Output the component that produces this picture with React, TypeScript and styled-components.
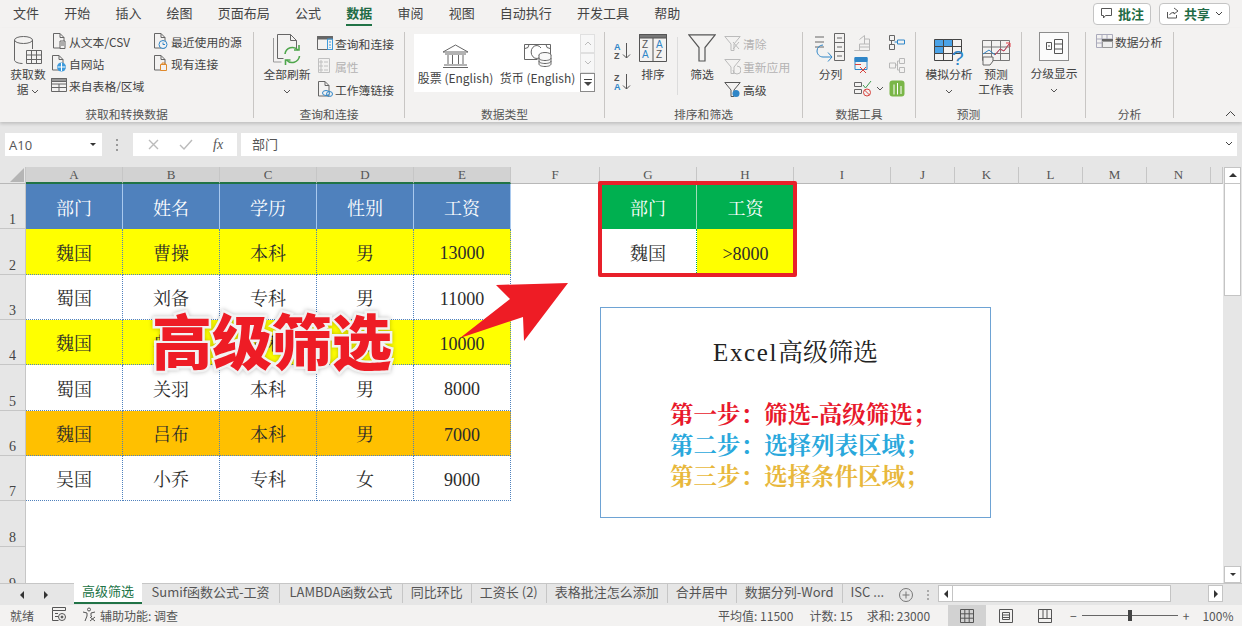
import React from 'react';
import styled, { createGlobalStyle } from 'styled-components';

const UI = `"Noto Sans CJK SC", "Noto Sans", sans-serif`;
const SERIF = `"Liberation Serif", "Noto Serif CJK SC", "Noto Sans CJK SC", serif`;

const GlobalStyle = createGlobalStyle`
  html, body { margin: 0; padding: 0; background: #fff; }
  * { box-sizing: border-box; }
`;

const Page = styled.div`
  width: 1242px;
  height: 626px;
  overflow: hidden;
  display: flex;
  flex-direction: column;
  font-family: ${UI};
  color: #444;
  background: #e6e6e6;
`;

/* title tabs */
const TabBar = styled.div`
  height: 28px;
  flex: none;
  display: flex;
  align-items: flex-start;
  gap: 25.2px;
  padding: 2px 12px 0 13px;
  background: #f3f2f1;
`;
const MenuTab = styled.div<{ $active?: boolean }>`
  height: 24px;
  font-size: 13px;
  line-height: 22px;
  white-space: nowrap;
  font-weight: ${p => (p.$active ? 700 : 400)};
  color: ${p => (p.$active ? '#1f6b45' : '#444')};
  border-bottom: ${p => (p.$active ? '2px solid #217346' : '2px solid transparent')};
`;
const TopActions = styled.div`
  margin-left: auto;
  display: flex;
  gap: 8px;
  padding-top: 1px;
`;
const TopButton = styled.div<{ $w: number }>`
  width: ${p => p.$w}px;
  height: 22px;
  display: flex;
  align-items: center;
  justify-content: center;
  gap: 5px;
  padding-bottom: 2px;
  background: #fff;
  border: 1px solid #c4c4c4;
  border-radius: 4px;
  font-size: 13px;
  font-weight: 700;
  color: #1f6b45;
`;

/* ribbon */
const Ribbon = styled.div`
  height: 94px;
  flex: none;
  display: flex;
  padding-top: 4px;
  background: #f3f2f1;
  box-shadow: 0 2px 3px rgba(0, 0, 0, 0.16);
  position: relative;
  font-size: 11.8px;
`;
const Group = styled.section<{ $w: number }>`
  width: ${p => p.$w}px;
  height: 86px;
  flex: none;
  display: flex;
  flex-direction: column;
  border-right: 1px solid #c8c6c4;
`;
const GroupBody = styled.div<{ $pad?: number }>`
  height: 73px;
  margin-top: -1px;
  display: flex;
  padding-left: ${p => p.$pad ?? 0}px;
`;
const GroupLabel = styled.div`
  height: 14px;
  line-height: 20px;
  text-align: center;
  font-size: 11.8px;
  color: #555;
`;
const BigButton = styled.div<{ $w: number; $ml?: number }>`
  width: ${p => p.$w}px;
  margin-left: ${p => p.$ml ?? 0}px;
  flex: none;
  display: flex;
  flex-direction: column;
  align-items: center;
  text-align: center;
  line-height: 15px;
  white-space: nowrap;
`;
const BigIcon = styled.div<{ $h?: number }>`
  height: ${p => p.$h ?? 35}px;
  display: flex;
  align-items: flex-end;
  justify-content: center;
`;
const BigCaption = styled.span`
  margin-top: 4px;
`;
const SmallColumn = styled.div<{ $w?: number; $ml?: number; $top?: number; $gap?: number }>`
  width: ${p => (p.$w ? `${p.$w}px` : 'auto')};
  margin-left: ${p => p.$ml ?? 0}px;
  padding-top: ${p => p.$top ?? 0}px;
  flex: none;
  display: flex;
  flex-direction: column;
  gap: ${p => p.$gap ?? 2}px;
`;
const SmallItem = styled.div<{ $off?: boolean }>`
  height: 20px;
  display: flex;
  align-items: center;
  gap: 2px;
  white-space: nowrap;
  color: ${p => (p.$off ? '#b3b3b3' : '#444')};
`;
const IconSlot = styled.span<{ $w?: number }>`
  width: ${p => p.$w ?? 17}px;
  flex: none;
  display: flex;
  justify-content: center;
`;
const Gallery = styled.div`
  margin: 3px 0 0 9px;
  width: 166px;
  height: 58px;
  display: flex;
  gap: 7px;
  padding-left: 4px;
  background: #fff;
  font-size: 12px;
  white-space: nowrap;
`;
const GalleryItem = styled.div`
  width: 75px;
  display: flex;
  flex-direction: column;
  align-items: center;
  justify-content: flex-end;
  padding-bottom: 6px;
  gap: 2px;
  line-height: 16px;
`;
const GalleryScroll = styled.div`
  width: 15px;
  height: 58px;
  margin-top: 3px;
  display: flex;
  flex-direction: column;
`;
const GalleryButton = styled.div<{ $boxed?: boolean }>`
  flex: 1;
  display: flex;
  align-items: center;
  justify-content: center;
  background: ${p => (p.$boxed ? '#fff' : '#f7f7f7')};
  border: 1px solid ${p => (p.$boxed ? '#8a8a8a' : '#e0e0e0')};
`;
const VSep = styled.div<{ $ml: number }>`
  width: 1px;
  height: 58px;
  margin: 6px 0 0 ${p => p.$ml}px;
  background: #dcdcdc;
  flex: none;
`;
const SortStack = styled.div`
  margin-left: 9px;
  padding-top: 11px;
  width: 20px;
  display: flex;
  flex-direction: column;
  gap: 13px;
`;
const ToolIcons = styled.div<{ $ml: number }>`
  margin-left: ${p => p.$ml}px;
  padding-top: 2px;
  display: flex;
  flex-direction: column;
  gap: 4px;
  flex: none;
`;
const ToolRow = styled.div`
  height: 19px;
  display: flex;
  align-items: center;
  gap: 3px;
`;
const OutlineBox = styled.div`
  width: 30px;
  height: 29px;
  margin-top: 1px;
  display: flex;
  align-items: center;
  justify-content: center;
  background: #fbfbfb;
  border: 1px solid #8d8d8d;
`;
const Collapse = styled.div`
  margin-left: auto;
  margin-right: 6px;
  align-self: flex-end;
  padding-bottom: 2px;
`;

/* formula bar */
const FormulaBar = styled.div`
  height: 45px;
  flex: none;
  display: flex;
  align-items: flex-start;
  padding: 11px 5px 0;
  background: #e6e6e6;
`;
const NameBox = styled.div`
  width: 97px;
  height: 23px;
  display: flex;
  align-items: center;
  justify-content: space-between;
  padding: 0 5px 0 4px;
  background: #fff;
  font-size: 13px;
  color: #555;
  font-family: "Open Sans", sans-serif;
`;
const Dots = styled.div`
  width: 31px;
  height: 23px;
  display: flex;
  align-items: center;
  justify-content: center;
`;
const FxBox = styled.div`
  width: 104px;
  height: 23px;
  display: flex;
  align-items: center;
  justify-content: space-around;
  padding: 0 4px;
  background: #fff;
`;
const FxText = styled.span`
  font-family: "Liberation Serif", serif;
  font-style: italic;
  font-size: 14px;
  color: #555;
`;
const FormulaInput = styled.div`
  flex: 1;
  height: 23px;
  margin-left: 4px;
  display: flex;
  align-items: center;
  justify-content: space-between;
  padding: 0 4px 2px 11px;
  background: #fff;
  font-size: 13px;
  color: #555;
`;

/* sheet */
const SheetArea = styled.div`
  height: 416px;
  flex: none;
  display: flex;
  position: relative;
  background: #fff;
`;
const SheetGrid = styled.div<{ $cols: string; $rows: string }>`
  flex: 1;
  display: grid;
  grid-template-columns: ${p => p.$cols};
  grid-template-rows: ${p => p.$rows};
  overflow: hidden;
`;
const Corner = styled.div`
  background: #e6e6e6;
  border-right: 1px solid #c6c6c6;
  border-bottom: 1px solid #b8b8b8;
  display: flex;
  align-items: flex-end;
  justify-content: flex-end;
  padding: 0 1px 1px 0;
`;
const CornerMark = styled.div`
  width: 14px;
  height: 14px;
  background: #b5b5b5;
  clip-path: polygon(100% 0, 100% 100%, 0 100%);
`;
const ColHead = styled.div<{ $on?: boolean }>`
  display: flex;
  align-items: center;
  justify-content: center;
  font-family: ${SERIF};
  font-size: 13px;
  color: #555;
  background: ${p => (p.$on ? '#d2d2d2' : '#e6e6e6')};
  border-right: 1px solid #c6c6c6;
  border-bottom: ${p => (p.$on ? '2px solid #217346' : '1px solid #b8b8b8')};
`;
const RowHead = styled.div`
  display: flex;
  align-items: flex-end;
  justify-content: center;
  font-family: ${SERIF};
  font-size: 14px;
  line-height: 16px;
  color: #444;
  background: #e6e6e6;
  border-right: 1px solid #c6c6c6;
  border-bottom: 1px solid #c6c6c6;
`;
const LINES = {
  none: '',
  dot: 'border-right: 1px dotted #4f81bd; border-bottom: 1px dotted #4f81bd;',
  head: 'border-right: 1px solid #a9c9ee;',
  greenHead: 'border-right: 1px solid #9fdcb8;',
  greenDot: 'border-right: 1px dotted #00b050;',
};
const Cell = styled.div<{ $bg?: string; $color?: string; $line?: keyof typeof LINES; $num?: boolean }>`
  display: flex;
  align-items: center;
  justify-content: center;
  font-family: ${SERIF};
  font-size: 18px;
  padding-top: ${p => (p.$num ? '4px' : '0')};
  color: ${p => p.$color ?? '#2b2b2b'};
  background: ${p => p.$bg ?? '#fff'};
  ${p => LINES[p.$line ?? 'none']}
`;
const Frame = styled.div`
  position: absolute;
  left: 598px;
  top: 14px;
  width: 199px;
  height: 96px;
  border: 4px solid #e8202a;
  border-radius: 2px;
`;
const Stamp = styled.div`
  position: absolute;
  left: 152px;
  top: 138px;
  font-size: 60px;
  line-height: 68px;
  font-weight: 900;
  white-space: nowrap;
  color: #ee1c25;
  -webkit-text-stroke: 5px #f2f2f2;
  paint-order: stroke fill;
  filter: drop-shadow(0 0 2px rgba(0, 0, 0, 0.25));
`;
const Arrow = styled.svg`
  position: absolute;
  left: 455px;
  top: 112px;
`;
const NoteBox = styled.div`
  position: absolute;
  left: 600px;
  top: 140px;
  width: 391px;
  height: 211px;
  border: 1.5px solid #6ea3d4;
  background: #fff;
  display: flex;
  flex-direction: column;
  font-family: ${SERIF};
`;
const NoteTitle = styled.div`
  margin-top: 27px;
  height: 36px;
  line-height: 36px;
  text-align: center;
  font-size: 25px;
  color: #222;
`;
const NoteLatin = styled.span`
  letter-spacing: 1.6px;
`;
const NoteSteps = styled.div`
  margin: 29px 0 0 69px;
  font-size: 23.5px;
  line-height: 31px;
  font-weight: 700;
`;
const NoteStep = styled.div<{ $color: string }>`
  color: ${p => p.$color};
  white-space: nowrap;
`;

const VScroll = styled.div`
  width: 19px;
  flex: none;
  display: flex;
  flex-direction: column;
  background: #e6e6e6;
  padding: 0 1px;
`;
const VButton = styled.div`
  height: 17px;
  display: flex;
  align-items: center;
  justify-content: center;
  background: #fff;
  border: 1px solid #c4c4c4;
`;
const VThumb = styled.div`
  height: 112px;
  background: #fff;
  border: 1px solid #c4c4c4;
  border-top: 0;
`;
const VTrack = styled.div`
  flex: 1;
`;

/* sheet tabs */
const SheetTabs = styled.div`
  height: 22px;
  flex: none;
  display: flex;
  background: #e6e6e6;
  border-top: 1px solid #c6c6c6;
`;
const TabNav = styled.div`
  width: 74px;
  flex: none;
  display: flex;
  align-items: center;
  gap: 16px;
  padding-left: 18px;
`;
const TabList = styled.div`
  width: 823px;
  flex: none;
  display: flex;
`;
const SheetTab = styled.div<{ $active?: boolean; $tight?: boolean }>`
  flex: none;
  padding: 0 ${p => (p.$active ? '8px' : p.$tight ? '8px' : '9.5px')};
  font-size: 13px;
  line-height: 16px;
  white-space: nowrap;
  color: ${p => (p.$active ? '#217346' : '#555')};
  background: ${p => (p.$active ? '#fff' : 'transparent')};
  margin-top: ${p => (p.$active ? '-1px' : '0')};
  height: ${p => (p.$active ? '21px' : '19px')};
  border-bottom: ${p => (p.$active ? '2px solid #217346' : '0')};
  border-right: ${p => (p.$active ? '0' : '1px solid #c6c6c6')};
  &:last-child { border-right: 0; }
`;
const TabTools = styled.div`
  width: 41px;
  flex: none;
  display: flex;
  align-items: center;
  gap: 13px;
  padding-left: 1px;
`;
const HScroll = styled.div`
  width: 285px;
  flex: none;
  height: 17px;
  margin-top: 1px;
  display: flex;
`;
const HButton = styled.div`
  width: 15px;
  flex: none;
  display: flex;
  align-items: center;
  justify-content: center;
  background: #fff;
  border: 1px solid #c4c4c4;
`;
const HThumb = styled.div`
  width: 218px;
  background: #fff;
  border: 1px solid #c4c4c4;
  border-left: 0;
`;
const HTrack = styled.div`
  flex: 1;
`;

/* status bar */
const StatusBar = styled.div`
  flex: 1;
  display: flex;
  align-items: center;
  padding-left: 10px;
  background: #f3f2f1;
  font-size: 12px;
  color: #555;
`;
const StatusText = styled.span<{ $ml?: number }>`
  margin-left: ${p => p.$ml ?? 0}px;
  white-space: nowrap;
`;
const ViewButton = styled.div<{ $on?: boolean }>`
  width: 38px;
  height: 21px;
  margin-left: ${p => (p.$on ? '18px' : '1px')};
  display: flex;
  align-items: center;
  justify-content: center;
  background: ${p => (p.$on ? '#d2d2d2' : 'transparent')};
`;
const ZoomRail = styled.div`
  width: 96px;
  height: 1px;
  margin: 0 5px;
  background: #666;
  display: flex;
  align-items: center;
  justify-content: center;
`;
const ZoomThumb = styled.div`
  width: 4px;
  height: 11px;
  background: #444;
`;

/* icons, drawn at their pixel size */
const G = '#666';
const B = '#3f9bdc';
const Ic = ({ w, h, children }: { w: number; h: number; children: React.ReactNode }) => (
  <svg width={w} height={h} viewBox={`0 0 ${w} ${h}`} fill="none" stroke={G} strokeWidth="1">{children}</svg>
);
const page = 'M1.5 1.5h6.5l4 4v10.5h-10.5z M8 1.5v4h4';

const DbIcon = () => (
  <Ic w={30} h={31}>
    <ellipse cx="10.5" cy="5" rx="9" ry="3.5" />
    <path d="M1.5 5v20c0 2 4 3.5 8 3.5 M19.5 5v9" />
    <path d="M13.5 15.5h15v13h-15z M13.5 20h15 M13.5 24.5h15 M18.5 15.5v13 M23.5 15.5v13" />
  </Ic>
);
const PageText = () => <Ic w={14} h={18}><path d={page} /><path d="M8 9h5v7.5h-5z M9 11h3 M9 13h3" fill="#f3f2f1" /></Ic>;
const PageWeb = () => <Ic w={15} h={18}><path d={page} /><circle cx="10.5" cy="13" r="4.5" fill={B} stroke="none" /><path d="M6.5 13h8 M10.5 9v8" stroke="#fff" /></Ic>;
const TableIcon = () => (
  <Ic w={16} h={16}>
    <path d="M.5 1.5h15v13H.5z M.5 7h15 M.5 10.5h15 M8 7v7.5" />
    <path d="M.5 1.5h15v3H.5z" fill="#999" />
  </Ic>
);
const PageClock = () => <Ic w={15} h={18}><path d={page} /><circle cx="10" cy="12.5" r="4" fill="#f3f2f1" stroke="#2f86c8" /><path d="M10 10.5v2h2" stroke="#2f86c8" /></Ic>;
const PageLink = () => <Ic w={15} h={18}><path d={page} /><path d="M7.5 10.5h6v6h-6z" fill="#f3f2f1" stroke="#e0892b" /><path d="M9 10.5V9h3v1.5" stroke="#e0892b" /></Ic>;
const RefreshIcon = () => (
  <Ic w={30} h={33}>
    <path d="M5.5 1.5h13l6 6v9 M5.5 1.5v24h6 M18.5 1.5v6h6" />
    <path d="M1.5 5v24h8" stroke="#999" />
    <path d="M13 21a7.5 7.5 0 0 1 13-4 M27.5 23a7.5 7.5 0 0 1-13 4" stroke="#4fa64c" strokeWidth="1.6" />
    <path d="M27 12v5h-5 M13.5 32v-5h5" stroke="#4fa64c" strokeWidth="1.6" />
  </Ic>
);
const QueryIcon = () => (
  <Ic w={16} h={15}>
    <path d="M.5 .5h15v13H.5z" />
    <path d="M.5 .5h15v2.5H.5z" fill="#666" />
    <path d="M10.5 3v10.5h5V3z" stroke="#3f9bdc" />
    <path d="M13 5v7" stroke="#3f9bdc" strokeDasharray="2 1" />
  </Ic>
);
const PropsIcon = () => <Ic w={13} h={16}><g stroke="#c0c0c0"><path d="M.5 .5h11v14H.5z M6 4h4 M6 8h4 M6 12h4" /><path d="M2 3h2v2H2z M2 7h2v2H2z M2 11h2v2H2z" /></g></Ic>;
const PageChain = () => <Ic w={16} h={18}><path d={page} /><ellipse cx="9" cy="13" rx="3.5" ry="2.5" fill="#f3f2f1" stroke="#2f86c8" /><ellipse cx="12.5" cy="14" rx="3" ry="2.5" stroke="#2f86c8" /></Ic>;
const BankIcon = () => (
  <Ic w={27} h={24}>
    <path d="M13.5 1L26 8H1z M3 10h21 M6 11v9 M10.5 11v9 M16.5 11v9 M21 11v9 M2 21h23 M1 23.5h25" />
  </Ic>
);
const MoneyIcon = () => (
  <Ic w={30} h={25}>
    <path d="M1.5 1.5h26v15H20 M1.5 1.5v15h13" />
    <path d="M6 1.5a4 4 0 0 1-4 4 M23 1.5a4 4 0 0 0 4 4" />
    <path d="M18 5a5.5 6.5 0 1 0 0 8" />
    <ellipse cx="22" cy="12" rx="6" ry="2.5" fill="#f9f9f9" />
    <path d="M16 12v9c0 1.500 2.500 2.500 6 2.500s6-1 6-2.500v-9 M16 15c0 1.500 2.500 2.500 6 2.500s6-1 6-2.500 M16 18c0 1.500 2.500 2.500 6 2.500s6-1 6-2.500" fill="#f9f9f9" />
  </Ic>
);
const Arr = ({ a, b }: { a: string; b: string }) => (
  <svg width="18" height="18" viewBox="0 0 18 18" fill="none">
    <text x="0" y="8" fontSize="9" fontFamily="'Liberation Sans',sans-serif" fontWeight="700" fill={a === 'A' ? '#2f86c8' : '#555'}>{a}</text>
    <text x="0" y="17" fontSize="9" fontFamily="'Liberation Sans',sans-serif" fontWeight="700" fill={b === 'A' ? '#2f86c8' : '#555'}>{b}</text>
    <path d="M12.500 1v15 M9 12.500l3.500 3.500 3.500-3.500" stroke="#555" />
  </svg>
);
const SortIcon = () => (
  <svg width="28" height="28" viewBox="0 0 28 28" fill="none" stroke="#555">
    <path d="M.5 .5h27v27H.5z M14 4v23.500" />
    <path d="M.5 .5h27v3.500H.5z" fill="#777" />
    <text x="3" y="14" fontSize="10" fill="#555" stroke="none" fontFamily="'Liberation Sans',sans-serif">Z</text>
    <text x="3" y="24" fontSize="10" fill="#2f86c8" stroke="none" fontFamily="'Liberation Sans',sans-serif">A</text>
    <text x="17" y="14" fontSize="10" fill="#2f86c8" stroke="none" fontFamily="'Liberation Sans',sans-serif">A</text>
    <text x="17" y="24" fontSize="10" fill="#555" stroke="none" fontFamily="'Liberation Sans',sans-serif">Z</text>
  </svg>
);
const FunnelIcon = () => <Ic w={28} h={28}><path d="M.8 .8h26.400L17 13.500v13.500h-6V13.500z" stroke="#555" strokeWidth="1.200" /></Ic>;
const MiniFunnel = ({ c, children }: { c: string; children?: React.ReactNode }) => (
  <Ic w={17} h={17}><path d="M.8 1.500h15.400L10 9v6.500H7V9z" stroke={c} />{children}</Ic>
);
const SplitIcon = () => (
  <Ic w={31} h={29}>
    <path d="M0 4h9 M0 9h9 M0 14h9" />
    <path d="M19.500 .5h10v27h-10z M19.500 9.500h10 M19.500 18.500h10 M22 5h5 M22 14h5 M22 23h5" />
    <path d="M8 12a6 6 0 0 0-6 6c0 3 2.500 6 6 6h8 M13 19.500l4 4.500-4 4.500" stroke="#2f86c8" />
  </Ic>
);
const Flash = () => <Ic w={16} h={16}><g stroke="#b8b8b8"><path d="M.5 15.500h15V4h-5v5h-5v6.500z M10.500 9h5 M5.500 12h10 M10.500 4V.5l-5 4" /></g></Ic>;
const DupIcon = () => (
  <Ic w={15} h={17}>
    <path d="M1 .5h12v12H1z" stroke="#2f86c8" />
    <path d="M1 .5h12v4H1z" fill="#2f86c8" stroke="#2f86c8" />
    <path d="M1 7.500h6 M6 10l6 6 M12 10l-6 6" stroke="#d8423c" />
  </Ic>
);
const ValidIcon = () => (
  <Ic w={19} h={17}>
    <path d="M.5 2.500h7v4h-7z M.5 9.500h7v4h-7z" />
    <path d="M9 5l2.500 3L17 1" stroke="#3e9b4f" />
    <circle cx="13" cy="12.500" r="3.500" stroke="#d8423c" fill="#f3f2f1" />
    <path d="M10.500 10l5 5" stroke="#d8423c" />
  </Ic>
);
const ConsolIcon = () => (
  <Ic w={16} h={15}>
    <path d="M.5 .5h5v5h-5z M.5 9.500h5v5h-5z M2.500 5.500v4" />
    <path d="M8.500 5h7v4h-7z" stroke="#2f86c8" />
    <path d="M5.500 7h3" stroke="#2f86c8" />
  </Ic>
);
const RelIcon = () => <Ic w={16} h={15}><g stroke="#b8b8b8"><path d="M.5 5h6v5h-6z M10.500 .5h5v5h-5z M10.500 9.500h5v5h-5z M6.500 7h2 M8.500 3v9h2 M8.500 3h2" /></g></Ic>;
const ModelIcon = () => (
  <svg width="16" height="17" viewBox="0 0 16 17">
    <rect x=".5" y=".5" width="15" height="16" rx="3" fill="#7ab648" />
    <path d="M5 4.500v10 M8.500 3v11.500 M12 6v8" stroke="#fff" fill="none" />
  </svg>
);
const WhatIfIcon = () => (
  <svg width="30" height="27" viewBox="0 0 30 27" fill="none" stroke="#444">
    <path d="M.5 .5h9v7h-9zM.5 7.500h9v7h-9z" fill="#4aa3e8" />
    <path d="M9.500 .5h9v7h-9z" fill="#4aa3e8" />
    <path d="M9.500 7.500h18M.5 14.500h27v-14h-9v21h-9v-21M.5 14.500v7h18" />
    <text x="18" y="26" fontSize="21" stroke="none" fill="#2f86c8" fontFamily="'Liberation Sans',sans-serif">?</text>
  </svg>
);
const ForecastIcon = () => (
  <Ic w={29} h={26}>
    <path d="M.5 .5h27v20h-27z M.5 7h27 M.5 13.500h27 M9.500 .5v20 M18.500 .5v20" stroke="#777" />
    <path d="M1 14l6-4 6 5 5-6 4 2 5-7" stroke="#2f86c8" />
    <path d="M13 15l5-6 4 2 5-7 M24 3h4v4" stroke="#e1414a" />
    <path d="M1 17h10v4l-3 4H1z" fill="#f3f2f1" />
  </Ic>
);
const OutlineIcon = () => (
  <Ic w={17} h={15}>
    <path d="M.5 3.500h5v7h-5z M2 7h2 M8.500 .5h8v14h-8z M8.500 5h8 M8.500 10h8" stroke="#555" />
  </Ic>
);
const AnalyzeIcon = () => (
  <Ic w={17} h={15}>
    <path d="M.5 .5h16v13H.5z M.5 5h16 M.5 9h16 M6 .5v13 M11 .5v13" stroke="#aab" />
    <path d="M6 5h11v2H6z" fill="#666" stroke="none" />
    <path d="M6.500 7.500h10v6h-10z" fill="#eee" stroke="#999" />
  </Ic>
);
const Chev = ({ c = '#555' }: { c?: string }) => (
  <svg width="8" height="5" viewBox="0 0 8 5" fill="none" stroke={c}><path d="M1 1l3 3 3-3" /></svg>
);
const Tri = ({ d }: { d: 'u' | 'd' | 'l' | 'r' }) => {
  const pts = { u: '0,5 8,5 4,1', d: '1,2 7,2 4,5', l: '6,0 6,8 2,4', r: '2,0 2,8 6,4' }[d];
  return <svg width="8" height="8" viewBox="0 0 8 8" fill="#333"><polygon points={pts} /></svg>;
};

const MENU = ['文件', '开始', '插入', '绘图', '页面布局', '公式', '数据', '审阅', '视图', '自动执行', '开发工具', '帮助'];
const COLS = ['A', 'B', 'C', 'D', 'E', 'F', 'G', 'H', 'I', 'J', 'K', 'L', 'M', 'N', ''];
const WIDTHS = [97, 97, 97, 97, 97, 89, 97, 97, 97, 64, 64, 64, 64, 64, 12];
const HEIGHTS = [45, 46, 45, 45, 46, 45, 45, 46, 46];
const TABS = ['Sumif函数公式-工资', 'LAMBDA函数公式', '同比环比', '工资长 (2)', '表格批注怎么添加', '合并居中', '数据分列-Word', 'ISC ...'];

const HEAD = ['部门', '姓名', '学历', '性别', '工资'];
const PEOPLE: { bg?: string; cells: string[] }[] = [
  { bg: '#ffff00', cells: ['魏国', '曹操', '本科', '男', '13000'] },
  { cells: ['蜀国', '刘备', '专科', '男', '11000'] },
  { bg: '#ffff00', cells: ['魏国', '典韦', '本科', '男', '10000'] },
  { cells: ['蜀国', '关羽', '本科', '男', '8000'] },
  { bg: '#ffc000', cells: ['魏国', '吕布', '本科', '男', '7000'] },
  { cells: ['吴国', '小乔', '专科', '女', '9000'] },
];

// one row of cells from column A to the empty strip after N
function sheetRow(r: number) {
  return COLS.map((_, c) => {
    const key = `${r}-${c}`;
    if (r === 0 && c < 5) return <Cell key={key} $bg="#4f81bd" $color="#fff" $line="head">{HEAD[c]}</Cell>;
    if (r > 0 && r <= 6 && c < 5) {
      const p = PEOPLE[r - 1];
      return <Cell key={key} $bg={p.bg} $line="dot" $num={c === 4}>{p.cells[c]}</Cell>;
    }
    if (r === 0 && c === 6) return <Cell key={key} $bg="#00b050" $color="#fff" $line="greenHead">部门</Cell>;
    if (r === 0 && c === 7) return <Cell key={key} $bg="#00b050" $color="#fff">工资</Cell>;
    if (r === 1 && c === 6) return <Cell key={key} $line="greenDot">魏国</Cell>;
    if (r === 1 && c === 7) return <Cell key={key} $bg="#ffff00" $num>&gt;8000</Cell>;
    return <Cell key={key} />;
  });
}

export default function App() {
  return (
    <Page>
      <GlobalStyle />
      <TabBar>
        {MENU.map(m => <MenuTab key={m} $active={m === '数据'}>{m}</MenuTab>)}
        <TopActions>
          <TopButton $w={58}>
            <svg width="13" height="12" viewBox="0 0 13 12" fill="none" stroke="#555"><path d="M1.500 1.500h10v7h-6l-2 2.500v-2.500h-2z" /></svg>
            批注
          </TopButton>
          <TopButton $w={71}>
            <svg width="13" height="12" viewBox="0 0 13 12" fill="none" stroke="#555"><path d="M8 1l4 3-4 3V5.500C5 5.500 4 7 3.500 8 M1.500 5v6h9V8" /></svg>
            共享
            <Chev c="#444" />
          </TopButton>
        </TopActions>
      </TabBar>

      <Ribbon>
        <Group $w={254}>
          <GroupBody $pad={10}>
            <BigButton $w={36}>
              <BigIcon><DbIcon /></BigIcon>
              获取数
              <span>据 <Chev /></span>
            </BigButton>
            <SmallColumn $w={102} $ml={4}>
              <SmallItem><IconSlot><PageText /></IconSlot>从文本/CSV</SmallItem>
              <SmallItem><IconSlot><PageWeb /></IconSlot>自网站</SmallItem>
              <SmallItem><IconSlot><TableIcon /></IconSlot>来自表格/区域</SmallItem>
            </SmallColumn>
            <SmallColumn>
              <SmallItem><IconSlot><PageClock /></IconSlot>最近使用的源</SmallItem>
              <SmallItem><IconSlot><PageLink /></IconSlot>现有连接</SmallItem>
            </SmallColumn>
          </GroupBody>
          <GroupLabel>获取和转换数据</GroupLabel>
        </Group>

        <Group $w={151}>
          <GroupBody $pad={9}>
            <BigButton $w={48}>
              <BigIcon><RefreshIcon /></BigIcon>
              全部刷新
              <span><Chev /></span>
            </BigButton>
            <SmallColumn $ml={5} $top={2} $gap={3}>
              <SmallItem><IconSlot><QueryIcon /></IconSlot>查询和连接</SmallItem>
              <SmallItem $off><IconSlot><PropsIcon /></IconSlot>属性</SmallItem>
              <SmallItem><IconSlot><PageChain /></IconSlot>工作簿链接</SmallItem>
            </SmallColumn>
          </GroupBody>
          <GroupLabel>查询和连接</GroupLabel>
        </Group>

        <Group $w={200}>
          <GroupBody>
            <Gallery>
              <GalleryItem><BankIcon />股票 (English)</GalleryItem>
              <GalleryItem><MoneyIcon />货币 (English)</GalleryItem>
            </Gallery>
            <GalleryScroll>
              <GalleryButton><svg width="8" height="5" viewBox="0 0 8 5" fill="none" stroke="#bbb"><path d="M1 4l3-3 3 3" /></svg></GalleryButton>
              <GalleryButton><Chev c="#bbb" /></GalleryButton>
              <GalleryButton $boxed><svg width="8" height="7" viewBox="0 0 8 7" fill="#444"><rect y="0" width="8" height="1" /><polygon points="0,3 8,3 4,7" /></svg></GalleryButton>
            </GalleryScroll>
          </GroupBody>
          <GroupLabel>数据类型</GroupLabel>
        </Group>

        <Group $w={198}>
          <GroupBody>
            <SortStack>
              <Arr a="A" b="Z" />
              <Arr a="Z" b="A" />
            </SortStack>
            <BigButton $w={34} $ml={2}>
              <BigIcon $h={31}><SortIcon /></BigIcon>
              <BigCaption>排序</BigCaption>
            </BigButton>
            <VSep $ml={7} />
            <BigButton $w={40} $ml={4}>
              <BigIcon $h={31}><FunnelIcon /></BigIcon>
              <BigCaption>筛选</BigCaption>
            </BigButton>
            <SmallColumn $ml={2} $top={2} $gap={3}>
              <SmallItem $off><IconSlot><MiniFunnel c="#bbb"><path d="M9 7l6 7 M15 7l-6 7" stroke="#bbb" /></MiniFunnel></IconSlot>清除</SmallItem>
              <SmallItem $off><IconSlot><MiniFunnel c="#bbb"><path d="M9 12a4 4 0 1 0 4-4" stroke="#bbb" /></MiniFunnel></IconSlot>重新应用</SmallItem>
              <SmallItem><IconSlot><MiniFunnel c="#555"><circle cx="12" cy="12.500" r="3.500" fill="#2f86c8" stroke="none" /></MiniFunnel></IconSlot>高级</SmallItem>
            </SmallColumn>
          </GroupBody>
          <GroupLabel>排序和筛选</GroupLabel>
        </Group>

        <Group $w={113}>
          <GroupBody $pad={11}>
            <BigButton $w={33}>
              <BigIcon $h={31}><SplitIcon /></BigIcon>
              <BigCaption>分列</BigCaption>
            </BigButton>
            <ToolIcons $ml={7}>
              <ToolRow><Flash /></ToolRow>
              <ToolRow><DupIcon /></ToolRow>
              <ToolRow><ValidIcon /><Chev /></ToolRow>
            </ToolIcons>
            <ToolIcons $ml={5}>
              <ToolRow><ConsolIcon /></ToolRow>
              <ToolRow><RelIcon /></ToolRow>
              <ToolRow><ModelIcon /></ToolRow>
            </ToolIcons>
          </GroupBody>
          <GroupLabel>数据工具</GroupLabel>
        </Group>

        <Group $w={106}>
          <GroupBody $pad={9}>
            <BigButton $w={48}>
              <BigIcon><WhatIfIcon /></BigIcon>
              模拟分析
              <span><Chev /></span>
            </BigButton>
            <BigButton $w={36} $ml={5}>
              <BigIcon><ForecastIcon /></BigIcon>
              预测
              <span>工作表</span>
            </BigButton>
          </GroupBody>
          <GroupLabel>预测</GroupLabel>
        </Group>

        <Group $w={64}>
          <GroupBody $pad={8}>
            <BigButton $w={48}>
              <OutlineBox><OutlineIcon /></OutlineBox>
              <BigCaption>分级显示</BigCaption>
              <span><Chev /></span>
            </BigButton>
          </GroupBody>
          <GroupLabel />
        </Group>

        <Group $w={88}>
          <GroupBody $pad={10}>
            <SmallColumn $top={0}>
              <SmallItem><IconSlot><AnalyzeIcon /></IconSlot>数据分析</SmallItem>
            </SmallColumn>
          </GroupBody>
          <GroupLabel>分析</GroupLabel>
        </Group>

        <Collapse>
          <svg width="11" height="7" viewBox="0 0 11 7" fill="none" stroke="#444"><path d="M1 6l4.500-4.500L10 6" /></svg>
        </Collapse>
      </Ribbon>

      <FormulaBar>
        <NameBox>A10<Tri d="d" /></NameBox>
        <Dots>
          <svg width="3" height="12" viewBox="0 0 3 12" fill="#999"><rect y="0" width="2" height="2" /><rect y="5" width="2" height="2" /><rect y="10" width="2" height="2" /></svg>
        </Dots>
        <FxBox>
          <svg width="13" height="13" viewBox="0 0 13 13" fill="none" stroke="#bbb" strokeWidth="1.400"><path d="M2 2l9 9 M11 2l-9 9" /></svg>
          <svg width="14" height="12" viewBox="0 0 14 12" fill="none" stroke="#bbb" strokeWidth="1.400"><path d="M1 6l4 4 8-9" /></svg>
          <FxText>fx</FxText>
        </FxBox>
        <FormulaInput>部门<Chev c="#444" /></FormulaInput>
      </FormulaBar>

      <SheetArea>
        <SheetGrid
          $cols={`26px ${WIDTHS.map(w => `${w}px`).join(' ')}`}
          $rows={`17px ${HEIGHTS.map(h => `${h}px`).join(' ')}`}
        >
          <Corner><CornerMark /></Corner>
          {COLS.map((c, i) => <ColHead key={i} $on={i < 5}>{c}</ColHead>)}
          {HEIGHTS.map((_, r) => (
            <React.Fragment key={r}>
              <RowHead>{r + 1}</RowHead>
              {sheetRow(r)}
            </React.Fragment>
          ))}
        </SheetGrid>
        <VScroll>
          <VButton><Tri d="u" /></VButton>
          <VThumb />
          <VTrack />
          <VButton><Tri d="d" /></VButton>
        </VScroll>

        <Frame />
        <Stamp>高级筛选</Stamp>
        <Arrow width="116" height="62" viewBox="0 0 116 62">
          <polygon points="113,4 41,6 55,20 5,59 68,38 69,62" fill="#ee1c25" />
        </Arrow>
        <NoteBox>
          <NoteTitle><NoteLatin>Excel</NoteLatin>高级筛选</NoteTitle>
          <NoteSteps>
            <NoteStep $color="#e8182b">第一步：筛选-高级筛选；</NoteStep>
            <NoteStep $color="#2aa8dc">第二步：选择列表区域；</NoteStep>
            <NoteStep $color="#e8b83c">第三步：选择条件区域；</NoteStep>
          </NoteSteps>
        </NoteBox>
      </SheetArea>

      <SheetTabs>
        <TabNav><Tri d="l" /><Tri d="r" /></TabNav>
        <TabList>
          <SheetTab $active>高级筛选</SheetTab>
          {TABS.map((t, i) => <SheetTab key={t} $tight={i >= 2}>{t}</SheetTab>)}
        </TabList>
        <TabTools>
          <svg width="16" height="16" viewBox="0 0 16 16" fill="none" stroke="#777"><circle cx="8" cy="8" r="6.500" /><path d="M8 4.500v7 M4.500 8h7" /></svg>
          <svg width="2" height="10" viewBox="0 0 2 10" fill="#aaa"><rect width="2" height="2" /><rect y="4" width="2" height="2" /><rect y="8" width="2" height="2" /></svg>
        </TabTools>
        <HScroll>
          <HButton><Tri d="l" /></HButton>
          <HThumb />
          <HTrack />
          <HButton><Tri d="r" /></HButton>
        </HScroll>
      </SheetTabs>

      <StatusBar>
        <StatusText>就绪</StatusText>
        <StatusText $ml={18}>
          <svg width="14" height="14" viewBox="0 0 14 14" fill="none" stroke="#555"><path d="M.5 .5h13v3H.5z M.5 3.500v10h6 M3 6.500h3 M3 9.500h3" /><circle cx="10" cy="10" r="3.500" /><circle cx="10" cy="10" r="1" fill="#555" /></svg>
        </StatusText>
        <StatusText $ml={16}>
          <svg width="15" height="15" viewBox="0 0 15 15" fill="none" stroke="#555"><circle cx="7" cy="2.500" r="1.500" /><path d="M1 5l4 1v3l-2 5 M13 5L9 6v3l1 1 M8 10l5 4 M13 10l-5 4" /></svg>
        </StatusText>
        <StatusText $ml={3}>辅助功能: 调查</StatusText>
        <StatusText $ml={540}>平均值: 11500</StatusText>
        <StatusText $ml={16}>计数: 15</StatusText>
        <StatusText $ml={14}>求和: 23000</StatusText>
        <ViewButton $on>
          <svg width="14" height="14" viewBox="0 0 14 14" fill="none" stroke="#555"><path d="M.5 .5h13v13H.5z M.5 4.800h13 M.5 9.200h13 M4.800 .5v13 M9.200 .5v13" /></svg>
        </ViewButton>
        <ViewButton>
          <svg width="14" height="14" viewBox="0 0 14 14" fill="none" stroke="#555"><path d="M.5 .5h13v13H.5z M3.500 3.500h7v7h-7z M3.500 6h7 M3.500 8.500h7" /></svg>
        </ViewButton>
        <ViewButton>
          <svg width="14" height="14" viewBox="0 0 14 14" fill="none" stroke="#555"><path d="M.5 .5h13v13H.5z M.5 9.500h13 M5 .5v9 M9 .5v9" /></svg>
        </ViewButton>
        <StatusText $ml={6}>−</StatusText>
        <ZoomRail><ZoomThumb /></ZoomRail>
        <StatusText>+</StatusText>
        <StatusText $ml={13}>100%</StatusText>
      </StatusBar>
    </Page>
  );
}
